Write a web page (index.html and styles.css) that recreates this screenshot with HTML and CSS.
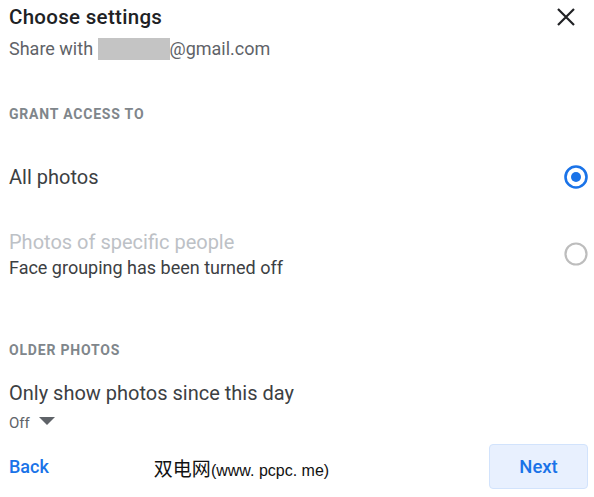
FILE: index.html
```html
<!DOCTYPE html>
<html lang="en">
<head>
  <meta charset="UTF-8">
  <title>Choose settings</title>
  <link rel="stylesheet" href="styles.css">
</head>
<body>
  <div class="dialog">
    <div class="top">
      <h1>Choose settings</h1>
      <svg class="close" width="20" height="20" viewBox="0 0 20 20">
        <path d="M2 2 L18 18 M18 2 L2 18" stroke="#202124" stroke-width="2.2" fill="none"/>
      </svg>
    </div>
    <p class="share">Share with <span class="blur"></span>@gmail.com</p>

    <h2 class="section">GRANT ACCESS TO</h2>

    <div class="option">
      <div class="label big">All photos</div>
      <svg class="radio" width="24" height="24" viewBox="0 0 24 24">
        <circle cx="12" cy="12" r="10.5" stroke="#1a73e8" stroke-width="2.6" fill="none"/>
        <circle cx="12" cy="12" r="5" fill="#1a73e8"/>
      </svg>
    </div>

    <div class="option second">
      <div>
        <div class="label disabled">Photos of specific people</div>
        <div class="label sub">Face grouping has been turned off</div>
      </div>
      <svg class="radio" width="24" height="24" viewBox="0 0 24 24">
        <circle cx="12" cy="12" r="10.5" stroke="#bdbdbd" stroke-width="2.2" fill="none"/>
      </svg>
    </div>

    <h2 class="section">OLDER PHOTOS</h2>
    <div class="label big since">Only show photos since this day</div>
    <div class="off">Off <span class="caret"></span></div>

    <div class="footer">
      <a class="back" href="#">Back</a>
      <span class="mark"><span class="cjk">双电网</span>(www. pcpc. me)</span>
      <button class="next">Next</button>
    </div>
  </div>
</body>
</html>
```

FILE: styles.css
```css
body {
  margin: 0;
  background-color: #fff;
  font-family: Roboto, 'Noto Sans', sans-serif;
  color: #3c4043;
}
.dialog {
  width: 594px;
  height: 497px;
  padding: 0 6px 0 9px;
  box-sizing: border-box;
}
.top {
  display: flex;
  justify-content: space-between;
  align-items: center;
  height: 33px;
}
h1 {
  margin: 0;
  font-size: 20.5px;
  font-weight: 500;
  color: #202124;
  letter-spacing: 0.3px;
}
.close {
  margin-right: 12px;
}
.share {
  margin: 4px 0 0;
  font-size: 18px;
  line-height: 24px;
  color: #5f6368;
}
.blur {
  display: inline-block;
  width: 72px;
  height: 22px;
  background-color: #c4c4c4;
  vertical-align: -5px;
}
.section {
  margin: 45px 0 0;
  font-size: 14px;
  line-height: 16px;
  font-weight: 700;
  letter-spacing: 0.8px;
  color: #80868b;
}
.option {
  display: flex;
  justify-content: space-between;
  align-items: center;
  margin-top: 41px;
}
.option.second {
  margin-top: 38px;
}
.option.second .radio {
  margin-top: -2px;
}
.option + h2 {
  margin-top: 61px;
}
.label {
  font-size: 18px;
  line-height: 26px;
}
.big {
  font-size: 20px;
  line-height: 28px;
  color: #3c4043;
}
.disabled {
  font-size: 20px;
  color: #bdc1c6;
}
.sub {
  color: #3c4043;
}
.since {
  margin-top: 21px;
}
.off {
  margin-top: 6px;
  font-size: 15px;
  line-height: 20px;
  color: #5f6368;
}
.caret {
  display: inline-block;
  width: 0;
  height: 0;
  border-left: 8px solid transparent;
  border-right: 8px solid transparent;
  border-top: 8px solid #5f6368;
  margin-left: 6px;
  vertical-align: 3px;
}
.footer {
  display: flex;
  align-items: center;
  margin-top: 11px;
}
.back {
  color: #1a73e8;
  text-decoration: none;
  font-size: 18px;
  font-weight: 500;
}
.mark {
  margin-left: 105px;
  margin-top: 2px;
  font-family: 'Liberation Sans', sans-serif;
  font-size: 16px;
  color: #111;
}
.cjk {
  font-family: 'Noto Sans CJK SC', sans-serif;
  font-size: 19px;
}
.next {
  margin-left: auto;
  width: 99px;
  height: 45px;
  background-color: #e8f0fe;
  border: 1px solid #d2e3fc;
  border-radius: 4px;
  color: #1a73e8;
  font-family: Roboto, sans-serif;
  font-size: 18.5px;
  font-weight: 500;
}
```
